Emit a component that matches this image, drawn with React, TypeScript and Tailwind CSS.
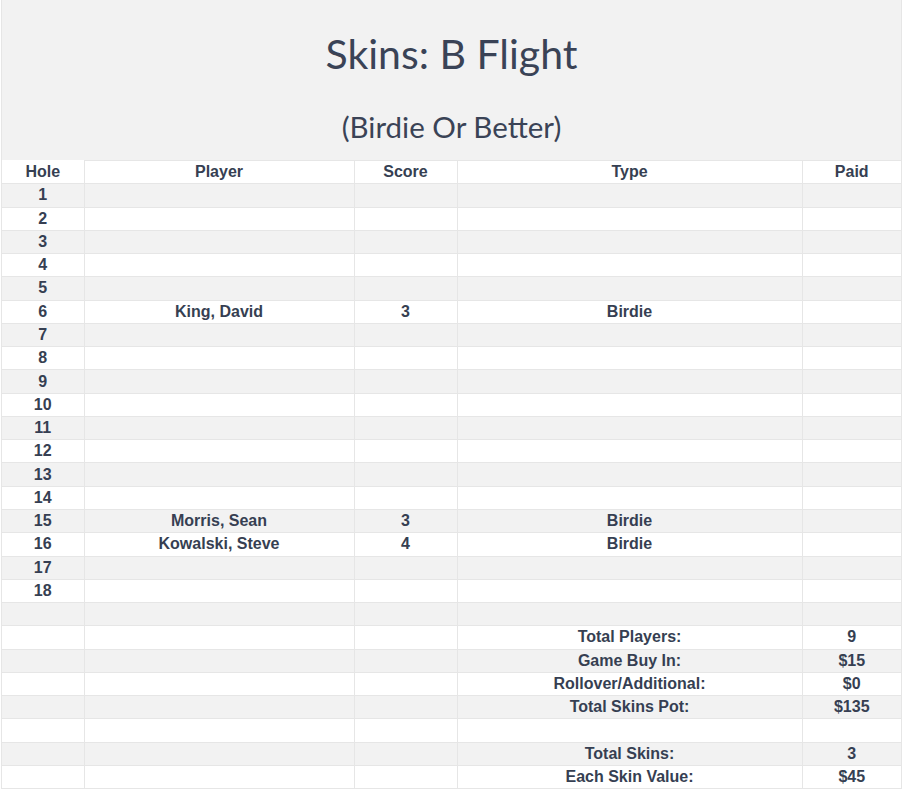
const rows: [string, string, string, string][] = [
  ["1", "", "", ""],
  ["2", "", "", ""],
  ["3", "", "", ""],
  ["4", "", "", ""],
  ["5", "", "", ""],
  ["6", "King, David", "3", "Birdie"],
  ["7", "", "", ""],
  ["8", "", "", ""],
  ["9", "", "", ""],
  ["10", "", "", ""],
  ["11", "", "", ""],
  ["12", "", "", ""],
  ["13", "", "", ""],
  ["14", "", "", ""],
  ["15", "Morris, Sean", "3", "Birdie"],
  ["16", "Kowalski, Steve", "4", "Birdie"],
  ["17", "", "", ""],
  ["18", "", "", ""],
];

const totals: [string, string][] = [
  ["", ""],
  ["Total Players:", "9"],
  ["Game Buy In:", "$15"],
  ["Rollover/Additional:", "$0"],
  ["Total Skins Pot:", "$135"],
  ["", ""],
  ["Total Skins:", "3"],
  ["Each Skin Value:", "$45"],
];

const cell = "h-[23.28px] p-0 border border-[#e6e6e6] text-center align-middle leading-[18px]";

const App = () => {
  return (
    <div className="pl-px bg-white min-h-[795px]">
      <div className="w-[901px] border-x border-[#e6e6e6]">
        <div className="bg-[#f2f2f2] h-[160px] flex flex-col items-center text-[#3a4356] font-['Lato',sans-serif]">
          <h1 className="mt-[28px] text-[41px] leading-[52px]">Skins: B Flight</h1>
          <h2 className="mt-[31px] text-[29.5px] leading-[32px]">(Birdie Or Better)</h2>
        </div>
        <table className="w-full border-collapse table-fixed font-['Liberation_Sans',Arial,sans-serif] font-bold text-[16px] text-[#363f52]">
          <colgroup>
            <col className="w-[82px]" />
            <col className="w-[270px]" />
            <col className="w-[103px]" />
            <col className="w-[345px]" />
            <col />
          </colgroup>
          <thead>
            <tr className="bg-white">
              <th className={`${cell} border-t-0 border-l-0`}>Hole</th>
              <th className={cell}>Player</th>
              <th className={cell}>Score</th>
              <th className={cell}>Type</th>
              <th className={`${cell} border-r-0`}>Paid</th>
            </tr>
          </thead>
          <tbody>
            {rows.map(([hole, player, score, type], i) => (
              <tr key={hole} className={i % 2 === 0 ? "bg-[#f2f2f2]" : "bg-white"}>
                <td className={`${cell} border-l-0`}>{hole}</td>
                <td className={cell}>{player}</td>
                <td className={cell}>{score}</td>
                <td className={cell}>{type}</td>
                <td className={`${cell} border-r-0`}></td>
              </tr>
            ))}
            {totals.map(([label, value], i) => (
              <tr key={i} className={i % 2 === 0 ? "bg-[#f2f2f2]" : "bg-white"}>
                <td className={`${cell} border-l-0`}></td>
                <td className={cell}></td>
                <td className={cell}></td>
                <td className={cell}>{label}</td>
                <td className={`${cell} border-r-0`}>{value}</td>
              </tr>
            ))}
          </tbody>
        </table>
      </div>
    </div>
  );
};

export default App;
